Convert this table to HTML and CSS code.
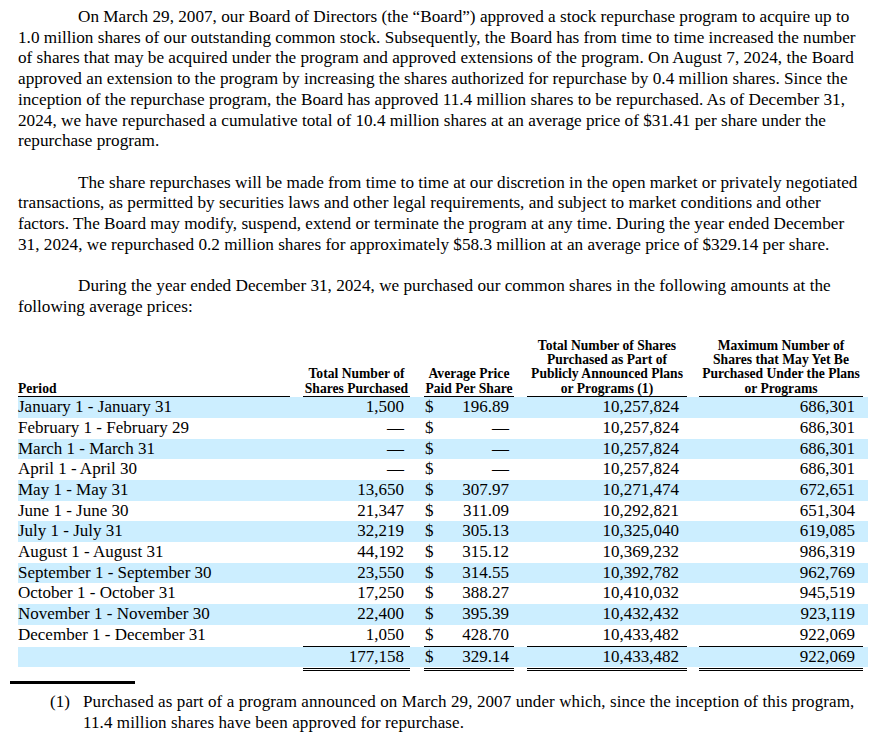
FILE: index.html
```html
<!DOCTYPE html>
<html lang="en">
<head>
  <meta charset="UTF-8" />
  <meta name="viewport" content="width=device-width, initial-scale=1.0"/>
  <title>Share Repurchase Program</title>
  <link rel="stylesheet" href="styles.css">
</head>
<body>

  <div class="page">
    <p class="para">On March 29, 2007, our Board of Directors (the “Board”) approved a stock repurchase program to acquire up to 1.0 million shares of our outstanding common stock. Subsequently, the Board has from time to time increased the number of shares that may be acquired under the program and approved extensions of the program. On August 7, 2024, the Board approved an extension to the program by increasing the shares authorized for repurchase by 0.4 million shares. Since the inception of the repurchase program, the Board has approved 11.4 million shares to be repurchased. As of December 31, 2024, we have repurchased a cumulative total of 10.4 million shares at an average price of $31.41 per share under the repurchase program.</p>

    <p class="para">The share repurchases will be made from time to time at our discretion in the open market or privately negotiated transactions, as permitted by securities laws and other legal requirements, and subject to market conditions and other factors. The Board may modify, suspend, extend or terminate the program at any time. During the year ended December 31, 2024, we repurchased 0.2 million shares for approximately $58.3 million at an average price of $329.14 per share.</p>

    <p class="para">During the year ended December 31, 2024, we purchased our common shares in the following amounts at the following average prices:</p>

    <table class="repurchases">
      <colgroup>
        <col class="c-period">
        <col class="c-total">
        <col class="c-price">
        <col class="c-plans">
        <col class="c-max">
      </colgroup>
      <thead>
        <tr>
          <th class="period"><div class="hd">Period</div></th>
          <th><div class="hd">Total Number of<br>Shares Purchased</div></th>
          <th><div class="hd">Average Price<br>Paid Per Share</div></th>
          <th><div class="hd">Total Number of Shares<br>Purchased as Part of<br>Publicly Announced Plans<br>or Programs (1)</div></th>
          <th><div class="hd">Maximum Number of<br>Shares that May Yet Be<br>Purchased Under the Plans<br>or Programs</div></th>
        </tr>
      </thead>
      <tbody id="rows"></tbody>
    </table>

    <div class="rule"></div>

    <div class="footnote">
      <span class="fn-mark">(1)</span>
      <span class="fn-text">Purchased as part of a program announced on March 29, 2007 under which, since the inception of this program, 11.4 million shares have been approved for repurchase.</span>
    </div>
  </div>

  <script>
    const rows = [
      ["January 1 - January 31", "1,500", "196.89", "10,257,824", "686,301"],
      ["February 1 - February 29", "—", "—", "10,257,824", "686,301"],
      ["March 1 - March 31", "—", "—", "10,257,824", "686,301"],
      ["April 1 - April 30", "—", "—", "10,257,824", "686,301"],
      ["May 1 - May 31", "13,650", "307.97", "10,271,474", "672,651"],
      ["June 1 - June 30", "21,347", "311.09", "10,292,821", "651,304"],
      ["July 1 - July 31", "32,219", "305.13", "10,325,040", "619,085"],
      ["August 1 - August 31", "44,192", "315.12", "10,369,232", "986,319"],
      ["September 1 - September 30", "23,550", "314.55", "10,392,782", "962,769"],
      ["October 1 - October 31", "17,250", "388.27", "10,410,032", "945,519"],
      ["November 1 - November 30", "22,400", "395.39", "10,432,432", "923,119"],
      ["December 1 - December 31", "1,050", "428.70", "10,433,482", "922,069"],
    ];

    const body = document.getElementById("rows");

    function rowHtml(r, cls) {
      return `
        <tr class="${cls}">
          <td class="period">${r[0]}</td>
          <td><div class="val">${r[1]}</div></td>
          <td><div class="val money"><span>$</span><span>${r[2]}</span></div></td>
          <td><div class="val">${r[3]}</div></td>
          <td><div class="val">${r[4]}</div></td>
        </tr>`;
    }

    body.innerHTML = rows.map((r, i) => rowHtml(r, i % 2 === 0 ? "band" : (i === rows.length - 1 ? "last" : ""))).join("")
      + rowHtml(["", "177,158", "329.14", "10,433,482", "922,069"], "band total")
      + `<tr class="closing"><td></td><td><div></div></td><td><div></div></td><td><div></div></td><td><div></div></td></tr>`;
  </script>

</body>
</html>
```

FILE: styles.css
```css
body {
  margin: 0;
  padding: 0;
  background: #fff;
  color: #000;
  font-family: "Liberation Serif", "Times New Roman", serif;
  font-size: 17.2px;
}

.page {
  padding: 7px 0 0 18px;
  width: 850px;
}

.para {
  margin: 0 0 20.7px 0;
  line-height: 20.7px;
  text-indent: 60px;
  width: 846px;
}

/* Table */
.repurchases {
  width: 850px;
  table-layout: fixed;
  border-collapse: collapse;
  margin-top: 21px;
  font-size: 17px;
}

.c-period { width: 279px; }
.c-total { width: 120px; }
.c-price { width: 104px; }
.c-plans { width: 172px; }
.c-max { width: 175px; }

.repurchases th {
  font-size: 13.6px;
  font-weight: bold;
  line-height: 14.4px;
  vertical-align: bottom;
  text-align: center;
  white-space: nowrap;
  padding: 0 6px 0 6px;
}

.repurchases th:nth-child(2) { padding-right: 7px; }
.repurchases th:nth-child(3) { padding: 0 7px 0 7px; }
.repurchases th:nth-child(4) { padding-right: 6px; }
.repurchases th:last-child { padding-right: 5px; }

.repurchases th.period {
  text-align: left;
  padding: 0 7px 0 0;
}

.hd {
  border-bottom: 1px solid #000;
}

.repurchases td {
  padding: 0 6px;
  height: 20.7px;
  line-height: 20.7px;
  white-space: nowrap;
}

.repurchases td:nth-child(2) { padding-right: 7px; }
.repurchases td:nth-child(3) { padding: 0 7px; }
.repurchases td:nth-child(4) { padding-right: 6px; }
.repurchases td:last-child { padding-right: 5px; }

.repurchases td.period {
  padding: 0;
}

.band {
  background: #cceeff;
}

.val {
  text-align: right;
  padding-right: 6px;
}

.money {
  display: flex;
  justify-content: space-between;
  padding-left: 1px;
  padding-right: 5px;
}

.repurchases td:nth-child(4) .val { padding-right: 8px; }
.repurchases td:last-child .val { padding-right: 8px; }

.last td div {
  border-bottom: 1px solid #000;
}

.closing td {
  height: 4px;
  line-height: 0;
}

.closing td div {
  border-top: 3px double #000;
}

/* Footnote */
.rule {
  width: 125px;
  height: 3px;
  background: #000;
  margin: 10px 0 0 -8px;
}

.footnote {
  display: flex;
  margin-top: 8px;
  line-height: 20.5px;
  font-size: 17px;
}

.fn-mark {
  width: 33px;
  padding-left: 32px;
  flex-shrink: 0;
}

.fn-text {
  width: 782px;
  letter-spacing: 0.1px;
}
```
